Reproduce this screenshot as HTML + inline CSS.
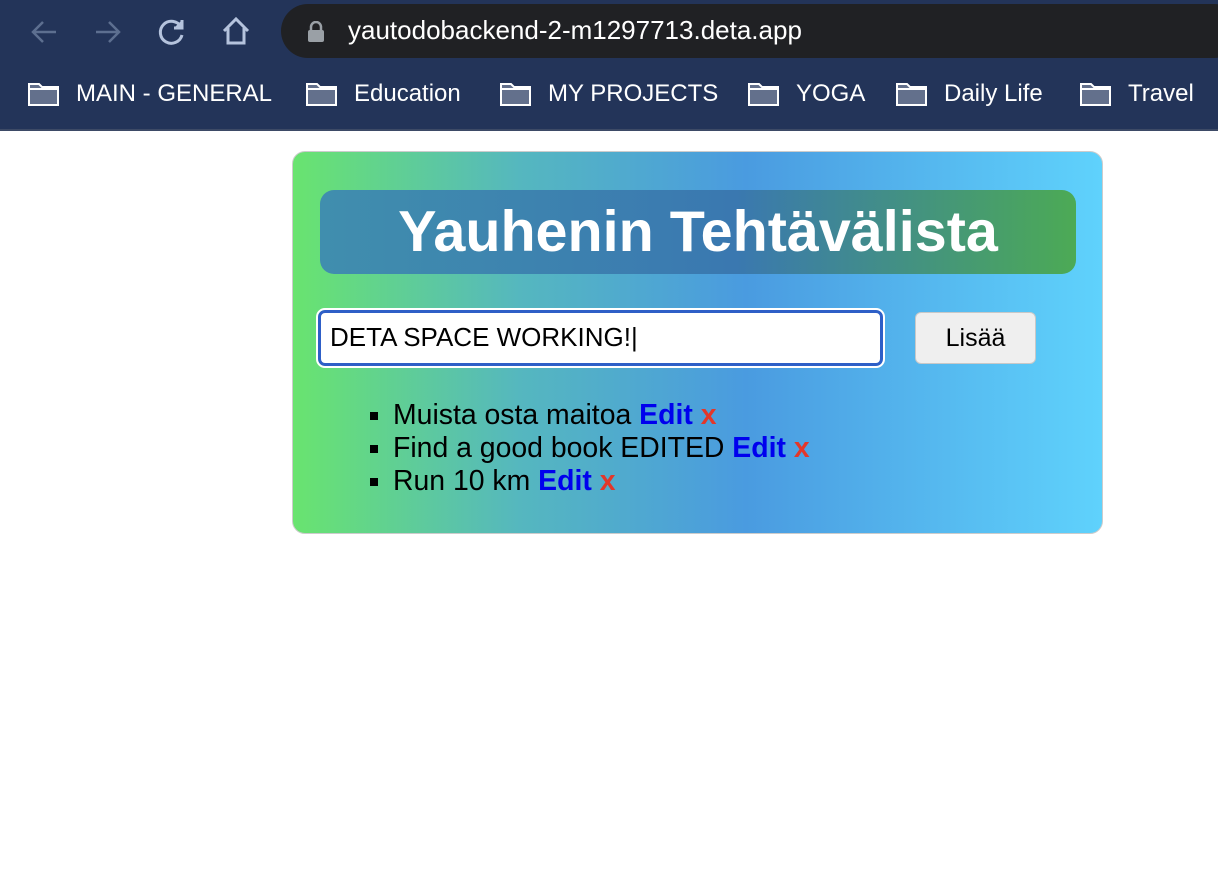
<!DOCTYPE html>
<html><head><meta charset="utf-8"><style>
*{margin:0;padding:0;box-sizing:border-box}
body{width:1218px;height:888px;background:#fff;font-family:"Liberation Sans",Arial,sans-serif;position:relative;overflow:hidden}
.top{position:absolute;left:0;top:0;width:1218px;height:131px;background:#233459;border-bottom:2px solid #3d4a66}
.pill{position:absolute;left:281px;top:4px;width:960px;height:54px;background:#202124;border-radius:27px}
.url{position:absolute;left:348px;top:15px;color:#fff;font-size:26px}
.bm{position:absolute;top:80px;color:#fff;font-size:24px;display:flex;align-items:center}
.bm svg{margin-right:16px}
.card{position:absolute;left:292px;top:151px;width:811px;height:383px;border-radius:13px;border:1px solid #ccc;background:linear-gradient(90deg,#69e46f 0%,#55b7bf 28%,#4a9be0 56%,#5fd2fc 100%)}
.hdr{position:absolute;left:27px;top:38px;width:756px;height:84px;border-radius:14px;background:linear-gradient(90deg,#408eae 0%,#3a78b0 55%,#4caa55 100%);color:#fff;font-weight:bold;font-size:57.5px;text-align:center;line-height:84px}
.inp{position:absolute;left:25px;top:158px;width:565px;height:56px;border:3px solid #2e5fc7;outline:2px solid #fff;border-radius:7px;background:#fff;font-size:26px;padding-left:9px;line-height:48px}
.btn{position:absolute;left:622px;top:160px;width:121px;height:52px;border:1px solid #c8c8c8;border-radius:6px;background:#efefef;font-size:25px;text-align:center;line-height:50px}
ul{position:absolute;left:100px;top:247px;list-style:square;font-size:28.4px;line-height:33px}
.e{color:#0000ee;font-weight:bold}.x{color:#e3372a;font-weight:bold}
</style></head><body>
<div class="top">
<svg style="position:absolute;left:28px;top:16px" width="32" height="32" viewBox="0 0 32 32" fill="none" stroke="#5d6f90" stroke-width="2.5"><path d="M28 16H5M15 6L5 16l10 10"/></svg>
<svg style="position:absolute;left:92px;top:16px" width="32" height="32" viewBox="0 0 32 32" fill="none" stroke="#5d6f90" stroke-width="2.5"><path d="M4 16h23M17 6l10 10-10 10"/></svg>
<svg style="position:absolute;left:156px;top:15px" width="32" height="32" viewBox="0 0 32 32" fill="none" stroke="#b5c3dd" stroke-width="3"><path d="M25 12A11 11 0 1 0 26 20"/><path d="M26 5v8h-8" fill="#b5c3dd"/></svg>
<svg style="position:absolute;left:220px;top:14px" width="32" height="34" viewBox="0 0 32 34" fill="none" stroke="#b5c3dd" stroke-width="3"><path d="M4 17L16 5l12 12M8 14v15h16V14"/></svg>
<div class="pill"></div>
<svg style="position:absolute;left:307px;top:21px" width="18" height="22" viewBox="0 0 18 22"><path d="M4 9V6a5 5 0 0 1 10 0v3" stroke="#9aa0a6" stroke-width="2.5" fill="none"/><rect x="1" y="9" width="16" height="12" rx="2" fill="#9aa0a6"/></svg>
<div class="url">yautodobackend-2-m1297713.deta.app</div>
<div class="bm" style="left:27px"><svg width="33" height="26" viewBox="0 0 33 26"><path d="M2 3h10l3 3h16v18H2z" fill="#63708c" stroke="#fff" stroke-width="2"/><path d="M2 8h29" stroke="#fff" stroke-width="2"/></svg>MAIN - GENERAL</div>
<div class="bm" style="left:305px"><svg width="33" height="26" viewBox="0 0 33 26"><path d="M2 3h10l3 3h16v18H2z" fill="#63708c" stroke="#fff" stroke-width="2"/><path d="M2 8h29" stroke="#fff" stroke-width="2"/></svg>Education</div>
<div class="bm" style="left:499px"><svg width="33" height="26" viewBox="0 0 33 26"><path d="M2 3h10l3 3h16v18H2z" fill="#63708c" stroke="#fff" stroke-width="2"/><path d="M2 8h29" stroke="#fff" stroke-width="2"/></svg>MY PROJECTS</div>
<div class="bm" style="left:747px"><svg width="33" height="26" viewBox="0 0 33 26"><path d="M2 3h10l3 3h16v18H2z" fill="#63708c" stroke="#fff" stroke-width="2"/><path d="M2 8h29" stroke="#fff" stroke-width="2"/></svg>YOGA</div>
<div class="bm" style="left:895px"><svg width="33" height="26" viewBox="0 0 33 26"><path d="M2 3h10l3 3h16v18H2z" fill="#63708c" stroke="#fff" stroke-width="2"/><path d="M2 8h29" stroke="#fff" stroke-width="2"/></svg>Daily Life</div>
<div class="bm" style="left:1079px"><svg width="33" height="26" viewBox="0 0 33 26"><path d="M2 3h10l3 3h16v18H2z" fill="#63708c" stroke="#fff" stroke-width="2"/><path d="M2 8h29" stroke="#fff" stroke-width="2"/></svg>Travel</div>
</div>
<div class="card">
<div class="hdr">Yauhenin Tehtävälista</div>
<div class="inp">DETA SPACE WORKING!|</div>
<div class="btn">Lisää</div>
<ul>
<li>Muista osta maitoa <span class="e">Edit</span> <span class="x">x</span></li>
<li>Find a good book EDITED <span class="e">Edit</span> <span class="x">x</span></li>
<li>Run 10 km <span class="e">Edit</span> <span class="x">x</span></li>
</ul>
</div>
</body></html>
